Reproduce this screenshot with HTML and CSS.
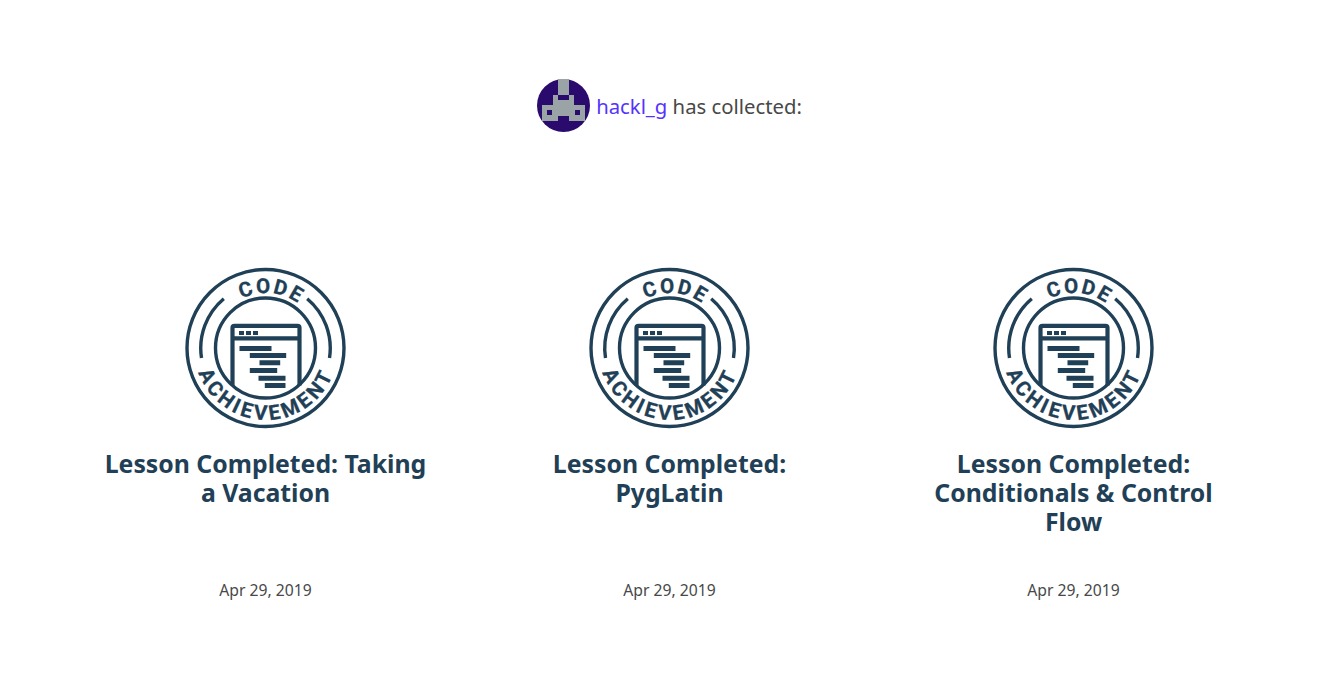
FILE: index.html
```html
<!DOCTYPE html>
<html lang="en">
<head>
    <meta charset="UTF-8">
    <title>hackl_g has collected</title>
    <link rel="stylesheet" href="styles.css">
</head>
<body>

<div class="collector">
    <svg class="avatar" viewBox="0 0 53 53">
        <circle cx="26.5" cy="26.5" r="26.5" fill="#2b0a6e"/>
        <path fill="#9aa3a6" d="M21 0h11v16h5v10h11v16H32v-5H21v5H5V26h11V16h5z"/>
        <path fill="#2b0a6e" d="M21 16h11v5H21zM10 31h5v5h-5zM38 31h5v5h-5z"/>
    </svg>
    <span class="collector-text"><a class="user" href="#">hackl_g</a> has collected:</span>
</div>

<div class="achievements">
    <div class="achievement">
        <svg class="badge" viewBox="-80 -80 160 160">
            <defs>
                <path id="top-arc" d="M-55 0A55 55 0 0 1 55 0"/>
                <path id="bottom-arc" d="M-72 0A72 72 0 0 0 72 0"/>
                <g id="badge-art">
                    <circle cx="-.5" r="78.5"/>
                    <circle cx="-.5" r="50"/>
                    <path d="M-42.2 -49.3A64.6 64.6 0 0 0 -64.5 10M41.2 -49.3A64.6 64.6 0 0 1 63.5 10"/>
                    <path class="window" d="M-33.5 37.5V-20.2a2 2 0 0 1 2 -2H31.5a2 2 0 0 1 2 2V37.5M-33.5 -9.7H33.5"/>
                    <path class="fill" d="M-27 -17h5v4h-5zM-20 -17h5v4h-5zM-13 -17h5v4h-5zM-26.5 -2H5.5V3H-26.5zM-16.2 5H20.2V10H-16.2zM-6.5 12.3H14.2V17.3H-6.5zM-16.2 20H11.2V25H-16.2zM-7.5 27.7H19.5V32.7H-7.5zM-1.2 35H19.5V40H-1.2z"/>
                </g>
            </defs>
            <use href="#badge-art" class="art"/>
            <text class="badge-text code"><textPath href="#top-arc" startOffset="53%">CODE</textPath></text>
            <text class="badge-text"><textPath href="#bottom-arc" startOffset="50%">ACHIEVEMENT</textPath></text>
        </svg>
        <h3 class="title">Lesson Completed: Taking a Vacation</h3>
        <p class="date">Apr 29, 2019</p>
    </div>
    <div class="achievement">
        <svg class="badge" viewBox="-80 -80 160 160">
            <use href="#badge-art" class="art"/>
            <text class="badge-text code"><textPath href="#top-arc" startOffset="53%">CODE</textPath></text>
            <text class="badge-text"><textPath href="#bottom-arc" startOffset="50%">ACHIEVEMENT</textPath></text>
        </svg>
        <h3 class="title">Lesson Completed: PygLatin</h3>
        <p class="date">Apr 29, 2019</p>
    </div>
    <div class="achievement">
        <svg class="badge" viewBox="-80 -80 160 160">
            <use href="#badge-art" class="art"/>
            <text class="badge-text code"><textPath href="#top-arc" startOffset="53%">CODE</textPath></text>
            <text class="badge-text"><textPath href="#bottom-arc" startOffset="50%">ACHIEVEMENT</textPath></text>
        </svg>
        <h3 class="title">Lesson Completed: Conditionals &amp; Control Flow</h3>
        <p class="date">Apr 29, 2019</p>
    </div>
</div>

</body>
</html>
```

FILE: styles.css
```css
body {
    margin: 0;
    padding-left: 7px;
    font-family: "Noto Sans", "Lato", sans-serif;
    background-color: #fff;
    color: #484848;
}

.collector {
    display: flex;
    align-items: center;
    justify-content: center;
    gap: 6px;
    height: 53px;
    padding-top: 79px;
    font-size: 20.3px;
    line-height: 53px;
}

.collector-text {
    padding-top: 1px;
}

.avatar {
    width: 53px;
    height: 53px;
}

.user {
    color: #5533ff;
    text-decoration: none;
}

.achievements {
    display: grid;
    grid-template-columns: repeat(3, 404px);
    justify-content: center;
    padding-top: 136px;
}

.achievement {
    display: flex;
    flex-direction: column;
    align-items: center;
}

.badge {
    width: 160px;
    height: 160px;
    overflow: visible;
}

.art {
    fill: none;
    stroke: #1f4056;
    stroke-width: 3.4;
}

#badge-art .window {
    stroke-width: 4.2;
}

#badge-art .fill {
    fill: #1f4056;
    stroke: none;
}

.badge-text {
    font-family: "Roboto", sans-serif;
    font-weight: 700;
    font-size: 20.5px;
    letter-spacing: 3.2px;
    fill: #1f4056;
    stroke: #1f4056;
    stroke-width: 0.3;
    text-anchor: middle;
}

.code {
    letter-spacing: 2.2px;
}

.title {
    width: 330px;
    min-height: 116px;
    margin: 21px 0 15px;
    font-size: 24.8px;
    line-height: 29px;
    font-weight: 700;
    text-align: center;
    color: #1f4056;
}

.date {
    margin: 0;
    font-size: 15.7px;
    line-height: 20px;
    color: #484848;
}
```
